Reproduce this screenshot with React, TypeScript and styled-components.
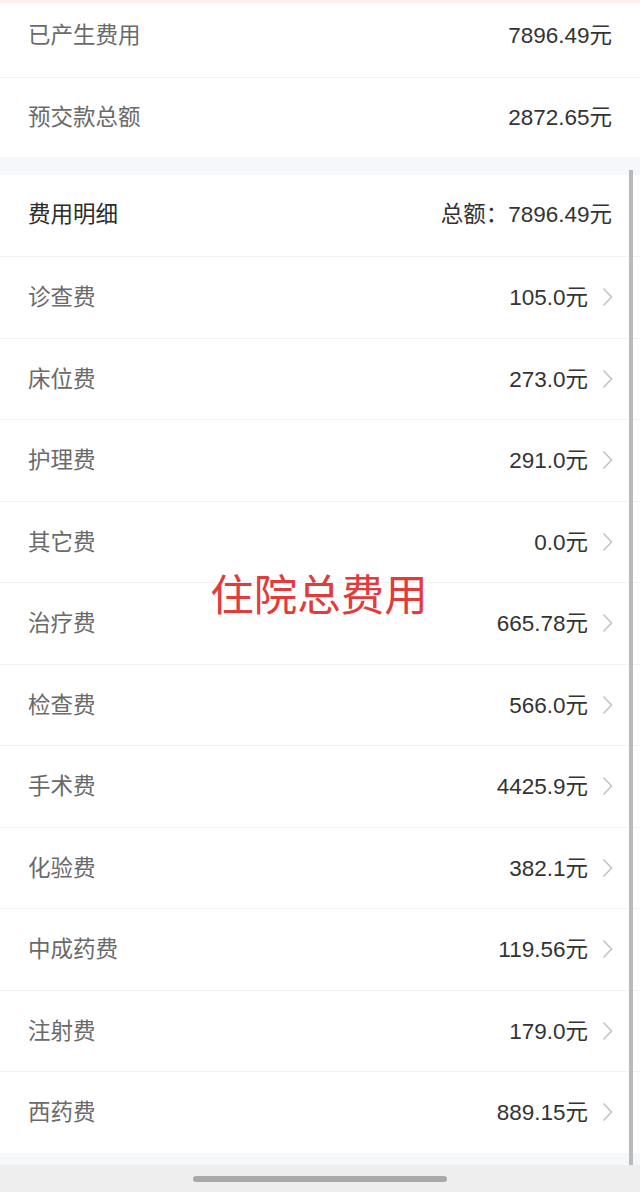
import React from 'react'
import styled, { createGlobalStyle } from 'styled-components'

const GlobalStyle = createGlobalStyle`
    html, body {
        margin: 0;
        padding: 0;
        background: #f6f7fb;
    }
    body {
        font-family: "Liberation Sans", "Noto Sans CJK SC", sans-serif;
    }
`

const Page = styled.div`
    position: relative;
    width: 640px;
    height: 1192px;
    overflow: hidden;
    background: #f6f7fb;
    display: flex;
    flex-direction: column;
`

const TopStrip = styled.div`
    height: 3px;
    background: #fdf0ea;
`

const Card = styled.div<{ $gap?: number }>`
    background: #ffffff;
    margin-bottom: ${p => p.$gap ?? 0}px;
`

const Row = styled.div<{ $h: number; $shift?: number; $divider?: boolean }>`
    box-sizing: border-box;
    height: ${p => p.$h}px;
    padding: 0 28px ${p => p.$shift ?? 4}px 28px;
    display: flex;
    align-items: center;
    justify-content: space-between;
    border-top: ${p => (p.$divider ? '1px solid #f1f1f3' : 'none')};
`

const Label = styled.div<{ $dark?: boolean }>`
    font-size: 22.5px;
    color: ${p => (p.$dark ? '#2b2b2b' : '#6a6a6a')};
`

const Value = styled.div`
    display: flex;
    align-items: center;
    font-size: 22.5px;
    color: #333333;
`

const Chevron = styled.svg`
    width: 11px;
    height: 20px;
    margin-left: 14px;
    margin-right: -1px;
    margin-top: 4px;
`

const Spacer = styled.div`
    flex: 1;
`

const HomeBar = styled.div`
    height: 27px;
    background: #eeeeee;
    display: flex;
    justify-content: center;
    align-items: center;
`

const Indicator = styled.div`
    width: 254px;
    height: 6px;
    border-radius: 3px;
    background: #a9a9a9;
`

const Scrollbar = styled.div`
    position: absolute;
    left: 629px;
    top: 170px;
    width: 4px;
    height: 995px;
    background: #b9b9b9;
`

const Watermark = styled.div`
    position: absolute;
    left: 0;
    right: 0;
    top: 565px;
    padding-right: 2px;
    text-align: center;
    font-family: "Noto Sans CJK SC", sans-serif;
    font-size: 43.5px;
    color: #e23b3b;
    line-height: 56px;
`

const items = [
    { name: '诊查费', amount: '105.0' },
    { name: '床位费', amount: '273.0' },
    { name: '护理费', amount: '291.0' },
    { name: '其它费', amount: '0.0' },
    { name: '治疗费', amount: '665.78' },
    { name: '检查费', amount: '566.0' },
    { name: '手术费', amount: '4425.9' },
    { name: '化验费', amount: '382.1' },
    { name: '中成药费', amount: '119.56' },
    { name: '注射费', amount: '179.0' },
    { name: '西药费', amount: '889.15' },
]

const Arrow = () => (
    <Chevron viewBox="0 0 11 20">
        <path d="M1.5 1.5 L9.5 10 L1.5 18.5" fill="none" stroke="#c4c4c4" strokeWidth="1.6" />
    </Chevron>
)

const App = () => {
    return (
        <Page>
            <GlobalStyle />
            <TopStrip />
            <Card $gap={18}>
                <Row $h={74} $shift={15}>
                    <Label>已产生费用</Label>
                    <Value>7896.49元</Value>
                </Row>
                <Row $h={80} $shift={6} $divider>
                    <Label>预交款总额</Label>
                    <Value>2872.65元</Value>
                </Row>
            </Card>
            <Card $gap={12}>
                <Row $h={81} $shift={8}>
                    <Label $dark>费用明细</Label>
                    <Value>总额：7896.49元</Value>
                </Row>
                {items.map((item, index) => (
                    <Row key={index} $h={81.5} $divider>
                        <Label>{item.name}</Label>
                        <Value>
                            {item.amount}元
                            <Arrow />
                        </Value>
                    </Row>
                ))}
            </Card>
            <Spacer />
            <HomeBar>
                <Indicator />
            </HomeBar>
            <Scrollbar />
            <Watermark>住院总费用</Watermark>
        </Page>
    )
}

export default App
